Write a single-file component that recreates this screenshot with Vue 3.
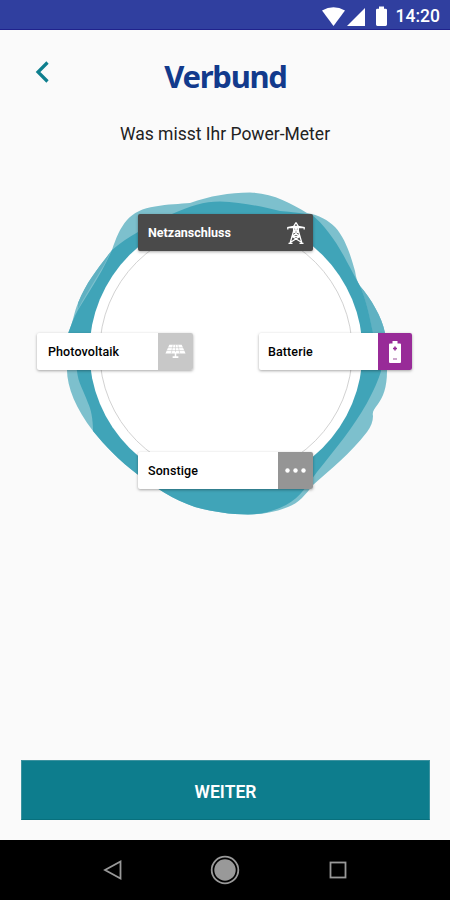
<template>
  <div class="screen">
    <div class="status-bar">
      <svg class="status-icons" viewBox="0 0 66 20">
        <path d="M0 4.5 Q11.5 -2 23 4.5 L11.5 20 Z" />
        <path d="M43 2 V20 H25 Z" />
        <path d="M57 0.5 h5 v2.2 h1.6 q1.4 0 1.4 1.4 V18.6 q0 1.4 -1.4 1.4 H55.4 q-1.4 0 -1.4 -1.4 V4.1 q0 -1.4 1.4 -1.4 H57 Z" />
      </svg>
      <span class="clock">14:20</span>
    </div>

    <header class="header">
      <button class="back-btn">
        <svg viewBox="0 0 14 22">
          <path d="M12.5 1.5 L3 11 L12.5 20.5" />
        </svg>
      </button>
      <h1>Verbund</h1>
    </header>

    <p class="question">Was misst Ihr Power-Meter</p>

    <div class="diagram">
      <svg class="blob" viewBox="0 180 450 350">
        <path
          class="blob-light"
          d="M67 352 C67 344 67 337 68.5 332 C73 323 74 312 78 303 C87 281 99 267 112 250 C116 238 120 228 127 220 C133 213 143 208 155 206.5 C168 204 180 204 190 203 C210 196 229 192.500 250 192.500 C272 193 291 203 307 213 C319 215 328 220 335 227 C346 239 351 257 355 271 C356 277 357 282 360 286 C371 299 382 317 385 333 C388 349 388 361 387 371 C387 388 383 397 378 404 C374 409 372 412 373 416 C373 421 371 427 367 432 C350 454 331 469 313 485 C306 494 299 503 288 507 C276 512 262 514.500 248 514.500 C229 514.500 209 511 195 507 C174 500 154 487 137 474 C120 461 105 446 93 431 C76 409 67 387 67 370 Z"
        />
        <path
          class="blob-mid"
          d="M78 303 C87 281 99 267 112 250 L110 253 C103 269 91 285 78 309 Z M360 286 C371 299 382 317 385 333 L386 340 L374 340 C371 322 366 300 360 286 Z"
        />
        <path
          class="blob-dark"
          d="M68 334 C71 325 74 317 78 310 C88 293 101 275 112 250 C120 243 129 237 138 232 C149 224 160 218 172 214 C190 206 204 201.500 220 201.500 C242 202 263 207 280 211 C292 212 303 213 312 215 C324 224 338 244 347 262 C352 271 356 279 360 286 C366 299 370 318 373 333 L381 371 C379 379 372 394 367 403 C352 429 337 447 317 472 C308 484 301 497 286 505 C274 511 262 514.500 248 514.500 C229 514.500 209 511 195 507 C174 500 154 487 137 474 C120 461 105 446 93 431 C93 419 91 409 88 403 C84 391 78 383 77 371 C75 359 70 345 68 334 Z"
        />
        <circle class="disc" cx="226" cy="351.5" r="136.5" />
        <circle class="ring" cx="226" cy="351.5" r="126.3" />
      </svg>

      <div v-for="meter in meters" :key="meter.id" class="meter" :class="meter.id">
        <span class="meter-label">{{ meter.label }}</span>
        <span class="meter-icon">
          <svg v-if="meter.id === 'grid'" class="icon-pylon" viewBox="0 0 18 22">
            <path d="M9 0.5 L6.600 4.500 L6.600 9 L3 21.500 M9 0.500 L11.400 4.500 V9 L15 21.500 M0.800 7.500 V5.600 L6.600 4.500 H11.400 L17.200 5.600 V7.500 M1 5.600 H17 M6.600 9 H11.400 M6.600 5 L11.400 9 M11.400 5 L6.600 9 M6.400 9.500 L12.800 14.500 L4 20 M11.600 9.500 L5.200 14.500 L14 20 M5.200 14.500 H12.800 M1.500 21.300 H5.500 M12.500 21.300 H16.500" />
          </svg>
          <svg v-else-if="meter.id === 'solar'" class="icon-solar" viewBox="0 0 22 15">
            <path class="panel" d="M4.500 0.500 H17.500 L21.500 9.500 H0.500 Z" />
            <path class="lines" d="M8.500 0.500 L6.500 9.500 M13.500 0.500 L15.500 9.500 M11 0.500 V9.500 M3 3.500 H19 M1.500 6.500 H20.500" />
            <path class="stand" d="M11 8 V14.300 M8 13.400 H14" />
          </svg>
          <svg v-else-if="meter.id === 'battery'" class="icon-battery" viewBox="0 0 12 22">
            <path class="cell" d="M3.500 0 H8.500 V2.500 H11 Q12 2.500 12 3.500 V21 Q12 22 11 22 H1 Q0 22 0 21 V3.500 Q0 2.500 1 2.500 H3.500 Z" />
            <path class="plus" d="M6 5.500 V9.500 M4 7.500 H8" />
            <path class="minus" d="M4 18 H8" />
          </svg>
          <svg v-else class="icon-dots" viewBox="0 0 21 5">
            <circle cx="2.500" cy="2.500" r="2.200" />
            <circle cx="10.500" cy="2.500" r="2.200" />
            <circle cx="18.500" cy="2.500" r="2.200" />
          </svg>
        </span>
      </div>
    </div>

    <button class="next-btn">WEITER</button>

    <nav class="nav-bar">
      <svg viewBox="0 0 30 30">
        <path d="M22.500 6.500 V23.500 L7 15 Z" />
      </svg>
      <svg viewBox="0 0 30 30">
        <circle cx="15" cy="15" r="13.300" />
        <circle class="home" cx="15" cy="15" r="10.700" />
      </svg>
      <svg viewBox="0 0 30 30">
        <rect x="7.500" y="7.500" width="15" height="15" />
      </svg>
    </nav>
  </div>
</template>

<script setup>
const meters = [
  { id: 'grid', label: 'Netzanschluss' },
  { id: 'solar', label: 'Photovoltaik' },
  { id: 'battery', label: 'Batterie' },
  { id: 'other', label: 'Sonstige' }
]
</script>

<style>
body {
  margin: 0;
}
</style>

<style scoped>
.screen {
  width: 450px;
  height: 900px;
  display: flex;
  flex-direction: column;
  background: #fafafa;
  font-family: Roboto, sans-serif;
  overflow: hidden;
}

.status-bar {
  height: 30px;
  box-sizing: border-box;
  display: flex;
  align-items: center;
  justify-content: flex-end;
  gap: 8px;
  padding: 2px 10px 0 0;
  background: #303f9f;
  border-bottom: 1px solid #20228c;
  flex-shrink: 0;
}

.status-icons {
  width: 66px;
  height: 20px;
  fill: #fff;
}

.clock {
  color: #fff;
  font-size: 17.5px;
  font-weight: 500;
}

.header {
  height: 90px;
  display: grid;
  grid-template-columns: 84px 1fr 84px;
  flex-shrink: 0;
}

.back-btn {
  border: none;
  background: none;
  padding: 31px 0 0 35px;
  display: flex;
  align-items: flex-start;
}

.back-btn svg {
  width: 14px;
  height: 22px;
  fill: none;
  stroke: #0e7f8e;
  stroke-width: 3.2;
}

.header h1 {
  margin: 24px 0 0 1px;
  font-family: "Noto Sans", sans-serif;
  font-size: 31px;
  line-height: 44px;
  font-weight: 700;
  letter-spacing: -1.3px;
  color: #123a8c;
  text-align: center;
}

.question {
  margin: 0;
  height: 60px;
  line-height: 28px;
  font-size: 17.5px;
  color: #222;
  text-align: center;
  flex-shrink: 0;
}

.diagram {
  position: relative;
  height: 350px;
  flex-shrink: 0;
}

.blob {
  display: block;
  width: 450px;
  height: 350px;
}

.blob-light {
  fill: #7dc0cd;
}

.blob-mid {
  fill: #60b1c2;
}

.blob-dark {
  fill: #40a4b8;
}

.disc {
  fill: #fff;
}

.ring {
  fill: none;
  stroke: #d2d2d2;
  stroke-width: 1;
}

.meter {
  position: absolute;
  display: flex;
  height: 37px;
  background: #fff;
  border-radius: 2px;
  box-shadow: 0 1px 3px rgba(0, 0, 0, 0.35);
  overflow: hidden;
}

.meter.grid {
  left: 138px;
  top: 34px;
  width: 175px;
  background: #4a4a4a;
  color: #fff;
}

.meter.solar {
  left: 37px;
  top: 153px;
  width: 156px;
}

.meter.battery {
  left: 259px;
  top: 153px;
  width: 153px;
}

.meter.other {
  left: 138px;
  top: 272px;
  width: 175px;
}

.meter-label {
  flex: 1;
  padding-left: 10px;
  line-height: 38px;
  font-size: 12.5px;
  font-weight: 500;
  letter-spacing: 0.1px;
}

.solar .meter-label {
  padding-left: 11px;
}

.battery .meter-label {
  padding-left: 9px;
}

.grid .meter-label {
  font-weight: 700;
  letter-spacing: 0;
}

.meter-icon {
  width: 35px;
  display: flex;
  align-items: center;
  justify-content: center;
}

.solar .meter-icon {
  background: #c8c8c8;
}

.battery .meter-icon {
  width: 34px;
  background: #982b98;
}

.other .meter-icon {
  background: #959595;
}

.icon-pylon {
  width: 18px;
  height: 22px;
  fill: none;
  stroke: #fff;
  stroke-width: 1.3;
}

.icon-solar {
  width: 21px;
  height: 15px;
}

.icon-solar .panel {
  fill: #fff;
}

.icon-solar .lines {
  stroke: #c8c8c8;
  stroke-width: 0.6;
}

.icon-solar .stand {
  stroke: #fff;
  stroke-width: 1.6;
}

.icon-battery {
  width: 12px;
  height: 22px;
}

.icon-battery .cell {
  fill: #fff;
}

.icon-battery .plus {
  stroke: #982b98;
  stroke-width: 1.6;
}

.icon-battery .minus {
  stroke: #bd8abd;
  stroke-width: 1.3;
}

.icon-dots {
  width: 21px;
  height: 5px;
  fill: #fff;
}

.next-btn {
  margin: auto 20px 20px 21px;
  height: 60px;
  padding: 3px 0 0;
  border: 1px solid #3c929f;
  border-bottom-color: #08707d;
  background: #0d7d8d;
  color: #fff;
  font-family: inherit;
  font-size: 17.5px;
  font-weight: 600;
  flex-shrink: 0;
}

.nav-bar {
  height: 60px;
  display: flex;
  align-items: center;
  justify-content: center;
  gap: 82.5px;
  background: #000;
  flex-shrink: 0;
}

.nav-bar svg {
  width: 30px;
  height: 30px;
  fill: none;
  stroke: #999;
  stroke-width: 1.8;
}

.nav-bar svg .home {
  fill: #999;
  stroke: none;
}
</style>
